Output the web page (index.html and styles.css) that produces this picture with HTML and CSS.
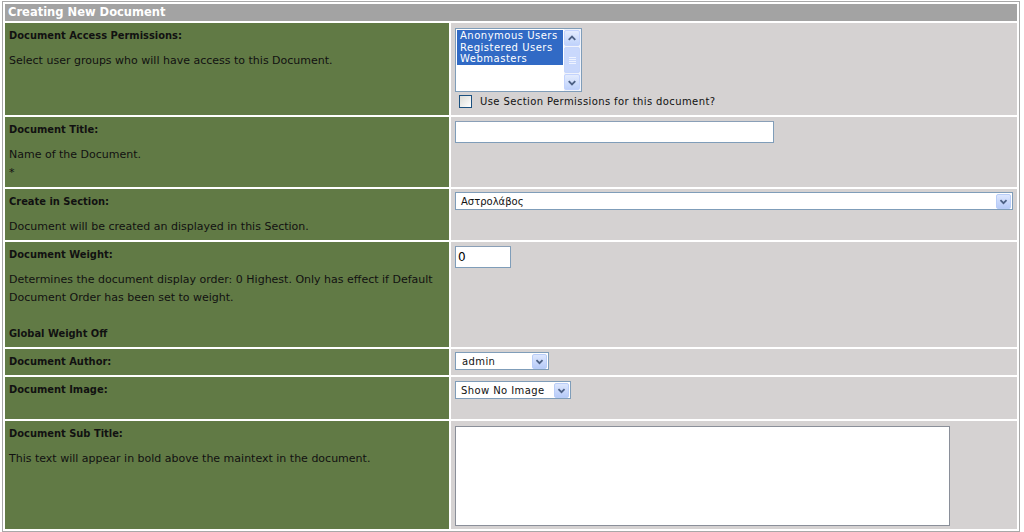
FILE: index.html
```html
<!DOCTYPE html>
<html>
<head>
<meta charset="utf-8">
<title>Creating New Document</title>
<link rel="stylesheet" href="styles.css">
</head>
<body>
<table class="form">
  <colgroup><col class="c-lab"><col class="c-ctl"></colgroup>
  <tr><th class="head" colspan="2">Creating New Document</th></tr>
  <tr>
    <td class="lab">
      <div class="label">Document Access Permissions:</div>
      <div class="desc">Select user groups who will have access to this Document.</div>
    </td>
    <td class="ctl ctl-list">
      <div class="listbox" role="listbox">
        <div class="opts">
          <div class="opt sel">Anonymous Users</div>
          <div class="opt sel">Registered Users</div>
          <div class="opt sel">Webmasters</div>
        </div>
        <div class="vscroll">
          <span class="sbtn"><svg width="15" height="15" viewBox="0 0 15 15"><path d="M4 9 L7.5 5.5 L11 9" fill="none" stroke="#4d6185" stroke-width="2"/></svg></span>
          <span class="thumb"><i></i><i></i><i></i><i></i></span>
          <span class="sbtn"><svg width="15" height="15" viewBox="0 0 15 15"><path d="M4 6 L7.5 9.5 L11 6" fill="none" stroke="#4d6185" stroke-width="2"/></svg></span>
        </div>
      </div>
      <label class="check"><span class="box"></span>Use Section Permissions for this document?</label>
    </td>
  </tr>
  <tr class="row-title">
    <td class="lab">
      <div class="label">Document Title:</div>
      <div class="desc">Name of the Document.<br>*</div>
    </td>
    <td class="ctl"><input class="text title" type="text"></td>
  </tr>
  <tr>
    <td class="lab">
      <div class="label">Create in Section:</div>
      <div class="desc">Document will be created an displayed in this Section.</div>
    </td>
    <td class="ctl ctl-tight">
      <span class="dd dd-wide"><span class="val val-greek">Αστρολάβος</span><span class="arrow"><svg width="15" height="15" viewBox="0 0 15 15"><path d="M4 6 L7.5 9.5 L11 6" fill="none" stroke="#4d6185" stroke-width="2"/></svg></span></span>
    </td>
  </tr>
  <tr>
    <td class="lab">
      <div class="label">Document Weight:</div>
      <div class="desc">Determines the document display order: 0 Highest. Only has effect if Default Document Order has been set to weight.<br><br><b>Global Weight Off</b></div>
    </td>
    <td class="ctl"><input class="text weight" type="text" value="0"></td>
  </tr>
  <tr>
    <td class="lab">
      <div class="label">Document Author:</div>
    </td>
    <td class="ctl ctl-tight">
      <span class="dd dd-author"><span class="val">admin</span><span class="arrow"><svg width="15" height="15" viewBox="0 0 15 15"><path d="M4 6 L7.5 9.5 L11 6" fill="none" stroke="#4d6185" stroke-width="2"/></svg></span></span>
    </td>
  </tr>
  <tr class="row-image">
    <td class="lab">
      <div class="label">Document Image:</div>
    </td>
    <td class="ctl">
      <span class="dd dd-image"><span class="val">Show No Image</span><span class="arrow"><svg width="15" height="15" viewBox="0 0 15 15"><path d="M4 6 L7.5 9.5 L11 6" fill="none" stroke="#4d6185" stroke-width="2"/></svg></span></span>
    </td>
  </tr>
  <tr>
    <td class="lab">
      <div class="label">Document Sub Title:</div>
      <div class="desc">This text will appear in bold above the maintext in the document.</div>
    </td>
    <td class="ctl ctl-area"><textarea class="area"></textarea></td>
  </tr>
</table>
</body>
</html>
```
FILE: styles.css
```css
html, body {
  margin: 0;
  padding: 0;
  background: #ffffff;
}
body {
  font-family: "DejaVu Sans", Verdana, sans-serif;
  font-size: 10px;
  color: #111;
}
.form {
  margin: 1px 0 0 2px;
  border: 1px solid #a8a8a8;
  border-spacing: 2px;
  width: 1018px;
  table-layout: fixed;
}
.c-lab { width: 444px; }
.c-ctl { width: 566px; }
.head {
  background: #a3a3a3;
  color: #fff;
  text-align: left;
  font-family: "DejaVu Sans", sans-serif;
  font-weight: bold;
  font-size: 11.5px;
  height: 17px;
  padding: 0 0 0 3px;
  line-height: 17px;
}
.lab {
  background: #617a45;
  vertical-align: top;
  padding: 4px 4px 4px 4px;
  line-height: 18px;
}
.row-title .lab {
  padding-bottom: 5px;
}
.label {
  font-weight: bold;
  font-size: 11px;
  font-family: "DejaVu Sans Condensed", "DejaVu Sans", sans-serif;
}
.desc {
  margin-top: 7px;
  font-size: 11px;
  font-family: "DejaVu Sans", sans-serif;
}
.desc b {
  font-weight: bold;
  font-family: "DejaVu Sans Condensed", "DejaVu Sans", sans-serif;
}
.ctl {
  background: #d5d2d2;
  vertical-align: top;
  padding: 4px 4px 3px 4px;
}
.ctl-list {
  padding-top: 5px;
  padding-bottom: 6px;
}
.ctl-tight {
  padding-top: 3px;
}
.ctl-area {
  padding-top: 5px;
}
.row-image .lab,
.row-image .ctl {
  height: 34px;
}

/* listbox */
.listbox {
  width: 125px;
  height: 62px;
  border: 1px solid #7f9db9;
  background: #fff;
  display: flex;
  padding: 0;
}
.opts {
  flex: 1;
  padding: 1px 1px 0 1px;
}
.opt {
  font-size: 10px;
  line-height: 11.5px;
  padding-left: 3px;
  letter-spacing: 0.5px;
  white-space: nowrap;
}
.opt.sel {
  background: #316ac5;
  color: #fff;
}
.vscroll {
  width: 17px;
  background: #f0f3fb;
  display: flex;
  flex-direction: column;
  padding: 1px 1px 1px 0;
  box-sizing: border-box;
}
.sbtn {
  width: 16px;
  height: 16px;
  box-sizing: border-box;
  border: 1px solid #c3d3fd;
  border-radius: 2px;
  background: linear-gradient(#e4ecfe, #bfd2fb);
  display: flex;
  align-items: center;
  justify-content: center;
}
.thumb {
  flex: 1;
  margin: 1px 0;
  border: 1px solid #c7d6fb;
  border-radius: 2px;
  background: #c9d8fc;
  display: flex;
  flex-direction: column;
  align-items: center;
  justify-content: center;
  gap: 1px;
}
.thumb i {
  display: block;
  width: 7px;
  height: 1px;
  background: #eef3ff;
}
.check {
  display: flex;
  align-items: center;
  margin-top: 1px;
  padding-left: 4px;
  height: 16px;
  font-size: 10px;
  letter-spacing: 0.4px;
  color: #111;
}
.box {
  width: 11px;
  height: 11px;
  border: 1px solid #1c5180;
  background: linear-gradient(135deg, #dcdcd7, #fff);
  margin-right: 8px;
}

/* inputs */
.text {
  display: block;
  box-sizing: border-box;
  height: 22px;
  border: 1px solid #7f9db9;
  border-top-color: #8a9fb7;
  background: #fff;
  margin: 0;
  padding: 1px 2px;
  font-family: "DejaVu Sans", sans-serif;
  font-size: 12px;
  outline: none;
}
.title { width: 319px; }
.weight { width: 56px; }

/* dropdowns */
.dd {
  display: flex;
  align-items: center;
  box-sizing: border-box;
  height: 18px;
  border: 1px solid #7f9db9;
  background: #fff;
  padding: 0 1px 0 5px;
}
.dd .val {
  flex: 1;
  font-size: 10px;
  letter-spacing: 0.4px;
  white-space: nowrap;
}
.dd .val-greek {
  letter-spacing: 0;
}
.arrow {
  width: 15px;
  height: 15px;
  box-sizing: border-box;
  border: 1px solid #b9cdf8;
  border-radius: 2px;
  background: linear-gradient(#dde7fe, #b7cbf8);
  display: flex;
  align-items: center;
  justify-content: center;
}
.dd-wide { width: 558px; }
.dd-author { width: 94px; padding-left: 6px; }
.dd-image { width: 116px; }

.area {
  display: block;
  box-sizing: border-box;
  width: 495px;
  height: 100px;
  border: 1px solid #8a8f99;
  background: #fff;
  margin: 0;
  resize: none;
  outline: none;
}
```
